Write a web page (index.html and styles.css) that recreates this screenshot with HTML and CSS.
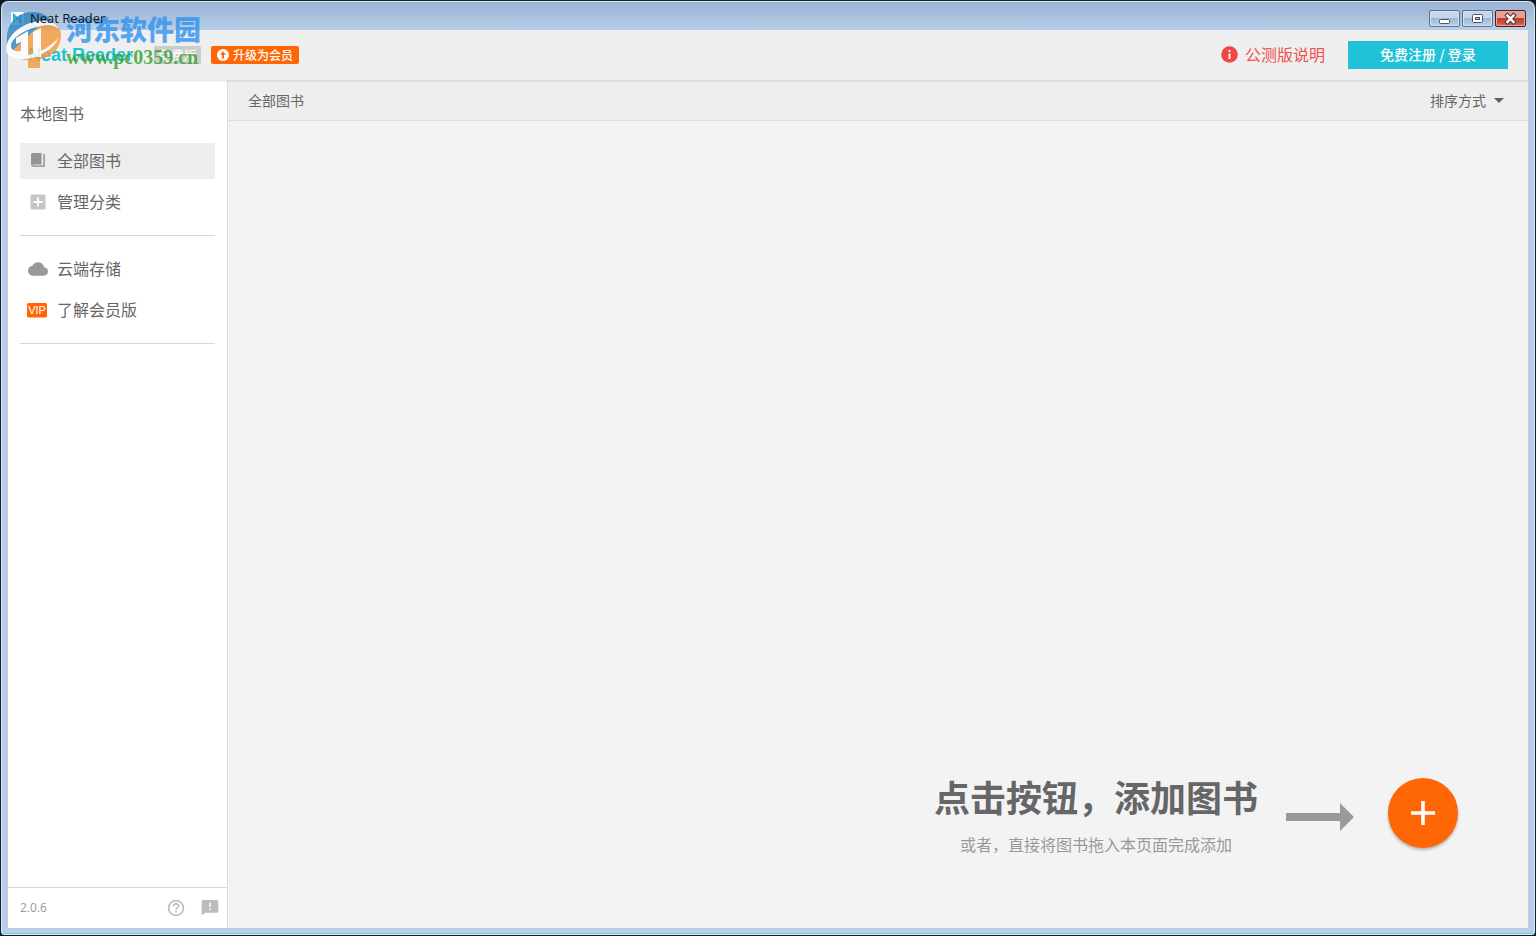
FILE: index.html
```html
<!DOCTYPE html>
<html lang="zh-CN">
<head>
<meta charset="utf-8">
<title>Neat Reader</title>
<link rel="stylesheet" href="styles.css">
</head>
<body>
<div class="window">
  <div class="titlebar">
    <svg class="app-icon" viewBox="0 0 13 13" aria-hidden="true"><rect width="13" height="13" rx="1" fill="#fff"/><path d="M3 10V3l6.500 7V3" fill="none" stroke="#20b8cc" stroke-width="2"/></svg>
    <span class="window-title">Neat Reader</span>
    <div class="window-controls">
      <button class="control" type="button" aria-label="最小化"><svg viewBox="0 0 29 15"><rect x="9.500" y="8.500" width="10" height="4" rx="1" fill="#fff" stroke="#4d5666"/></svg></button>
      <button class="control" type="button" aria-label="最大化"><svg viewBox="0 0 29 15"><rect x="9.500" y="3.500" width="10" height="8" rx="1" fill="#fff" stroke="#4d5666"/><rect x="12.500" y="6.500" width="4" height="2" fill="#a9bfdc" stroke="#4d5666"/></svg></button>
      <button class="control control-close" type="button" aria-label="关闭"><svg viewBox="0 0 29 15"><path d="M11.500 4.500l6 6.500M17.500 4.500l-6 6.500" stroke="#5a3238" stroke-width="4.500" stroke-linecap="square"/><path d="M11.500 4.500l6 6.500M17.500 4.500l-6 6.500" stroke="#fff" stroke-width="2.500" stroke-linecap="square"/></svg></button>
    </div>
  </div>

  <div class="client">
    <header class="header">
      <span class="brand">Neat Reader</span>
      <span class="edition">免费版</span>
      <button class="upgrade" type="button">
        <svg width="12" height="12" viewBox="0 0 12 12" aria-hidden="true"><circle cx="6" cy="6" r="6" fill="#fff"/><path d="M6 2.300L9 5.700H7.100V9.500H4.900V5.700H3z" fill="#ff6606"/></svg>
        升级为会员
      </button>
      <a class="notice" href="#beta">
        <svg width="17" height="17" viewBox="0 0 17 17" aria-hidden="true"><circle cx="8.500" cy="8.500" r="8.300" fill="#f44545"/><rect x="7.500" y="4" width="2" height="2" fill="#fff"/><rect x="7.500" y="7.500" width="2" height="5.500" fill="#fff"/></svg>
        公测版说明
      </a>
      <button class="login" type="button">免费注册 / 登录</button>
    </header>

    <div class="body">
      <aside class="sidebar">
        <nav class="nav">
          <h2 class="nav-title">本地图书</h2>
          <div class="nav-group">
            <a class="nav-item nav-item-active" href="#all"><svg class="nav-icon" viewBox="0 0 24 24" aria-hidden="true"><path d="M6.500 5h9v11.500H5V6.500Q5 5 6.500 5z" fill="#949494"/><path d="M5 15v1.500Q5 19 7.500 19H19V6h-1.800v11.300H8q-1.200 0-1.200-1.300z" fill="#a2a2a2"/></svg>全部图书</a>
            <a class="nav-item" href="#categories"><svg class="nav-icon" viewBox="0 -1 24 24" aria-hidden="true"><rect x="4.500" y="4.500" width="15" height="15" rx="1.500" fill="#c5c5c5"/><path d="M12 7.500v9M7.500 12h9" stroke="#fff" stroke-width="1.800"/></svg>管理分类</a>
          </div>
          <div class="nav-group">
            <a class="nav-item" href="#cloud"><svg class="nav-icon" viewBox="0 -1 24 24" aria-hidden="true"><path transform="translate(2 2) scale(.834)" d="M19.350 10.040C18.670 6.590 15.640 4 12 4 9.110 4 6.600 5.640 5.350 8.040 2.340 8.360 0 10.910 0 14c0 3.310 2.690 6 6 6h13c2.760 0 5-2.240 5-5 0-2.640-2.050-4.780-4.650-4.960z" fill="#999"/></svg>云端存储</a>
            <a class="nav-item" href="#vip"><svg class="nav-icon" viewBox="0 -1 24 24" aria-hidden="true"><rect x="1" y="5" width="20" height="14.500" rx="1.500" fill="#ff6606"/><text class="vip-text" x="11" y="16" text-anchor="middle">VIP</text></svg>了解会员版</a>
          </div>
        </nav>
        <footer class="sidebar-footer">
          <span class="version">2.0.6</span>
          <button class="icon-button" type="button" aria-label="帮助"><svg viewBox="0 0 20 20"><circle cx="10" cy="10" r="7.400" fill="none" stroke="#bcbcbc" stroke-width="1.700"/><path d="M7.500 8.300c0-3.300 5-3.100 5-.2 0 1.800-2.500 1.800-2.500 3.700" fill="none" stroke="#bcbcbc" stroke-width="1.600"/><rect x="9.200" y="12.700" width="1.600" height="1.700" fill="#bcbcbc"/></svg></button>
          <button class="icon-button" type="button" aria-label="反馈"><svg viewBox="0 0 20 20"><path d="M3.200 2h13.600q1.500 0 1.500 1.500v9.800q0 1.500-1.500 1.500H5L1.700 17.500v-14Q1.700 2 3.200 2z" fill="#bcbcbc"/><path d="M9.200 4.800h1.700v4H9.200zM9.200 10.400h1.700v1.700H9.200z" fill="#fff"/></svg></button>
        </footer>
      </aside>

      <main class="main">
        <div class="toolbar">
          <h1 class="toolbar-title">全部图书</h1>
          <button class="sort" type="button">排序方式<svg width="10" height="5" viewBox="0 0 10 5" aria-hidden="true"><path d="M0 0h10L5 5z" fill="#606060"/></svg></button>
        </div>
        <section class="library">
          <div class="hint">
            <p class="hint-title">点击按钮，添加图书</p>
            <p class="hint-text">或者，直接将图书拖入本页面完成添加</p>
          </div>
          <svg class="arrow" width="68" height="28" viewBox="0 0 68 28" aria-hidden="true"><path d="M0 10h54V0l14 14-14 14V18H0z" fill="#999"/></svg>
          <button class="add" type="button" aria-label="添加图书"><svg width="24" height="24" viewBox="0 0 24 24"><path d="M12 0v24M0 12h24" stroke="#fff" stroke-width="3.600"/></svg></button>
        </section>
      </main>
    </div>
  </div>

  <div class="watermark">
    <svg class="watermark-logo" viewBox="0 0 58 58" aria-hidden="true">
      <path d="M2 29C2 12 13 2 28 2c9 0 15 4 19 9L36 24v22H9C4 42 2 36 2 29z" fill="#2d83c5"/>
      <path d="M36 14c12-4 21 2 20 13-1 12-9 20-21 22v9H23v-8C15 50 9 48 5 43z" fill="#f39a3d"/>
      <path d="M1 38C3 24 18 13 34 11c10-1 17 2 20 8-5-4-11-5-18-3C20 19 6 28 6 36c0 4 4 6 10 5V32l-5 2v-6l12-7v24c12-2 24-9 31-18-5 12-18 20-33 22C9 50 0 46 1 38z" fill="#fff"/>
      <path d="M28 22l8-4v29h-8z" fill="#fff"/>
    </svg>
    <div class="watermark-words">
      <span class="watermark-name">河东软件园</span>
      <span class="watermark-url">www.pc0359.cn</span>
    </div>
  </div>
</div>
</body>
</html>
```
FILE: styles.css
```css
* { box-sizing: border-box; }

body {
  margin: 0;
  background: #111820;
  color: #666;
  font-family: "Noto Sans CJK SC", sans-serif;
  font-size: 16px;
}

h1, h2, p { margin: 0; font-weight: 400; }
a { color: inherit; text-decoration: none; }
button {
  padding: 0;
  border: 0;
  background: none;
  color: inherit;
  font: inherit;
  cursor: pointer;
}
svg { display: block; flex: none; }

.window {
  position: relative;
  display: flex;
  flex-direction: column;
  min-height: 100vh;
  padding: 0 6px 6px;
  border: 1px solid #18202c;
  border-radius: 8px 8px 4px 4px;
  background: linear-gradient(#98b1d1 0, #b9cfe9 30px, #b9cfe9 100%);
  box-shadow: inset 0 0 0 1px #d4e8f8, inset 0 -2px 0 #7dcbea;
}

.titlebar {
  display: flex;
  align-items: center;
  gap: 6px;
  height: 29px;
  padding: 5px 3px 0 4px;
}
.app-icon { width: 13px; height: 13px; }
.window-title {
  position: relative;
  z-index: 3;
  color: #111;
  font: 13px/16px "Open Sans", sans-serif;
}
.window-controls { display: flex; gap: 2px; margin-left: auto; }
.control {
  width: 31px;
  height: 17px;
  border: 1px solid #59708e;
  border-radius: 2px;
  background: linear-gradient(#c5d6ea 0 45%, #9fb7d4 50%, #bdd2ea);
  box-shadow: inset 0 0 0 1px #d3e0f0;
}
.control-close {
  border-color: #491c28;
  background: linear-gradient(#e3a093 0 45%, #bd3c27 50%, #d66b50);
  box-shadow: inset 0 0 0 1px #e6a79b;
}

.client {
  display: flex;
  flex: 1;
  flex-direction: column;
  min-width: 0;
  margin: 0 1px 1px;
  background: #f3f3f3;
}

.header {
  z-index: 1;
  display: flex;
  align-items: center;
  height: 50px;
  padding: 0 20px;
  background: #efefef;
  box-shadow: 0 1px 2px #0002;
}
.brand {
  color: #1fc2d7;
  font: bold 18px/20px "Liberation Sans", sans-serif;
}
.edition {
  margin-left: 21px;
  padding: 0 4px;
  border-radius: 2px;
  background: #ccc;
  color: #fff;
  font-size: 13px;
  line-height: 18px;
}
.upgrade {
  display: flex;
  align-items: center;
  gap: 4px;
  height: 18px;
  margin-left: 10px;
  padding: 0 6px;
  border-radius: 2px;
  background: #ff6606;
  color: #fff;
  font-size: 12px;
  font-weight: 500;
  line-height: 18px;
}
.notice {
  display: flex;
  align-items: center;
  gap: 7px;
  margin-left: auto;
  padding-bottom: 2px;
  color: #f05050;
}
.login {
  width: 160px;
  height: 28px;
  margin-left: 23px;
  padding-bottom: 2px;
  background: #1fc2d7;
  color: #fff;
  font-size: 14px;
  font-weight: 500;
  line-height: 26px;
}

.body { display: flex; flex: 1; }
.sidebar {
  display: flex;
  flex: none;
  flex-direction: column;
  width: 220px;
  border-right: 1px solid #ddd;
  background: #fff;
}
.nav { flex: 1; padding: 21px 12px 0; }
.nav-title { font-size: 16px; line-height: 24px; }
.nav-group {
  display: flex;
  flex-direction: column;
  gap: 5px;
  padding: 15px 0;
  border-bottom: 1px solid #d9d9d9;
}
.nav-title + .nav-group { padding-top: 18px; }
.nav-item {
  display: flex;
  align-items: center;
  gap: 7px;
  height: 36px;
  padding: 0 0 2px 6px;
}
.nav-item-active { background: #ededed; }
.nav-icon { width: 24px; height: 24px; }
.vip-text { fill: #fff; font: 11px "Liberation Sans", sans-serif; }

.sidebar-footer {
  display: flex;
  align-items: center;
  gap: 14px;
  height: 41px;
  padding: 0 7px 0 12px;
  border-top: 1px solid #d9d9d9;
}
.version {
  margin-right: auto;
  color: #999;
  font: 12px/18px "Open Sans", sans-serif;
}
.icon-button, .icon-button svg { width: 20px; height: 20px; }

.main { display: flex; flex: 1; flex-direction: column; min-width: 0; }
.toolbar {
  display: flex;
  align-items: center;
  justify-content: space-between;
  height: 41px;
  padding: 0 24px 0 20px;
  border-bottom: 1px solid #e0e0e0;
  background: #eee;
  font-size: 14px;
}
.toolbar-title { font-size: 14px; }
.sort { display: flex; align-items: center; gap: 8px; }

.library {
  display: flex;
  flex: 1;
  align-items: flex-end;
  justify-content: flex-end;
  padding: 0 70px 70px 20px;
}
.hint { text-align: center; }
.hint-title {
  font-size: 36px;
  font-weight: 700;
  line-height: 54px;
}
.hint-text {
  margin: 9px 0 2px;
  color: #999;
  font-size: 16px;
  line-height: 24px;
}
.arrow { margin: 0 34px 27px 28px; }
.add {
  display: grid;
  place-items: center;
  width: 70px;
  height: 70px;
  margin-bottom: 10px;
  border-radius: 50%;
  background: #ff6606;
  box-shadow: 0 2px 3px #0004;
}

.watermark {
  position: absolute;
  z-index: 2;
  top: 9px;
  left: 4px;
  display: flex;
  gap: 3px;
  opacity: 0.8;
  pointer-events: none;
}
.watermark-logo { width: 58px; height: 58px; }
.watermark-words { display: flex; flex-direction: column; }
.watermark-name {
  color: #2f93ee;
  font-size: 27px;
  font-weight: 900;
  line-height: 38px;
}
.watermark-url {
  color: #35a02c;
  font: bold 20px/18px "Liberation Serif", serif;
}
```
